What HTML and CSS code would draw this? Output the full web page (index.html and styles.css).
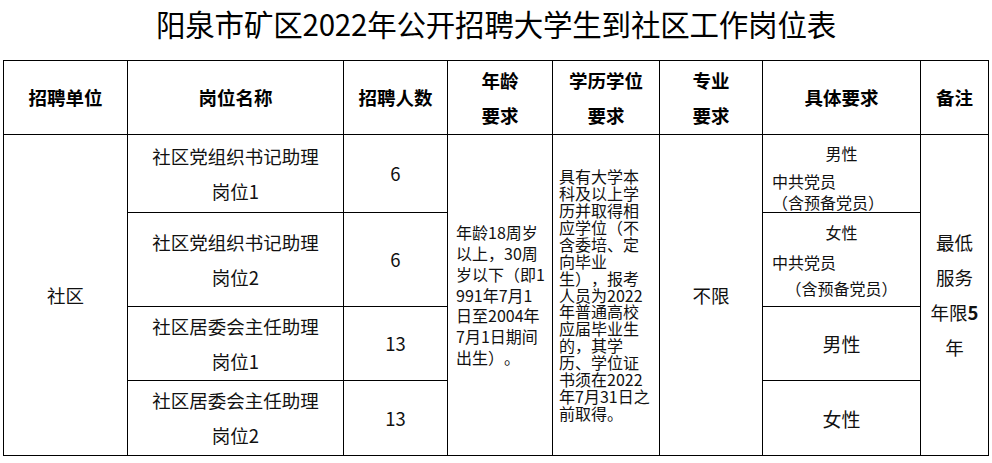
FILE: index.html
```html
<!DOCTYPE html>
<html lang="zh-CN">
<head>
<meta charset="utf-8">
<title>阳泉市矿区2022年公开招聘大学生到社区工作岗位表</title>
<link rel="stylesheet" href="styles.css">
</head>
<body>
<h1 class="title">阳泉市矿区2022年公开招聘大学生到社区工作岗位表</h1>
<table class="jobs">
  <colgroup>
    <col class="c-unit">
    <col class="c-name">
    <col class="c-num">
    <col class="c-age">
    <col class="c-edu">
    <col class="c-major">
    <col class="c-req">
    <col class="c-note">
  </colgroup>
  <thead>
    <tr class="r-head">
      <th>招聘单位</th>
      <th>岗位名称</th>
      <th>招聘人数</th>
      <th>年龄<br>要求</th>
      <th>学历学位<br>要求</th>
      <th>专业<br>要求</th>
      <th>具体要求</th>
      <th>备注</th>
    </tr>
  </thead>
  <tbody>
    <tr class="r1">
      <td rowspan="4">社区</td>
      <td>社区党组织书记助理<br>岗位1</td>
      <td>6</td>
      <td rowspan="4" class="age">年龄18周岁<br>以上，30周<br>岁以下（即1<br>991年7月1<br>日至2004年<br>7月1日期间<br>出生）。</td>
      <td rowspan="4" class="edu">具有大学本<br>科及以上学<br>历并取得相<br>应学位（不<br>含委培、定<br>向毕业<br>生），报考<br>人员为2022<br>年普通高校<br>应届毕业生<br>的，其学<br>历、学位证<br>书须在2022<br>年7月31日之<br>前取得。</td>
      <td rowspan="4">不限</td>
      <td class="req req1">
        <div class="sex">男性</div>
        <div class="party">中共党员</div>
        <div class="pre">（含预备党员）</div>
      </td>
      <td rowspan="4" class="note">最低<br>服务<br>年限<b>5</b><br>年</td>
    </tr>
    <tr class="r2">
      <td>社区党组织书记助理<br>岗位2</td>
      <td>6</td>
      <td class="req req2">
        <div class="sex">女性</div>
        <div class="party">中共党员</div>
        <div class="pre">（含预备党员）</div>
      </td>
    </tr>
    <tr class="r3">
      <td>社区居委会主任助理<br>岗位1</td>
      <td>13</td>
      <td class="big">男性</td>
    </tr>
    <tr class="r4">
      <td>社区居委会主任助理<br>岗位2</td>
      <td>13</td>
      <td class="big">女性</td>
    </tr>
  </tbody>
</table>
</body>
</html>
```
FILE: styles.css
```css
html, body {
  margin: 0;
  padding: 0;
  background: #fff;
}
body {
  width: 992px;
  height: 463px;
  overflow: hidden;
  font-family: "Noto Sans CJK SC", "Noto Sans", sans-serif;
  color: #111;
  text-spacing-trim: space-all;
}
.title {
  margin: 0;
  height: 60px;
  line-height: 46px;
  font-size: 29.5px;
  font-weight: 400;
  text-align: center;
  color: #000;
  letter-spacing: -0.2px;
}
.jobs {
  margin-left: 3px;
  border-collapse: collapse;
  table-layout: fixed;
  width: 985px;
}
.c-unit { width: 124px; }
.c-name { width: 216px; }
.c-num { width: 104px; }
.c-age { width: 105px; }
.c-edu { width: 107px; }
.c-major { width: 103px; }
.c-req { width: 158px; }
.c-note { width: 68px; }

.jobs th,
.jobs td {
  border: 1px solid #000;
  padding: 0;
  text-align: center;
  vertical-align: middle;
  font-size: 18.5px;
  line-height: 35px;
  white-space: nowrap;
}
.jobs th {
  font-weight: 700;
  color: #000;
}
.r-head { height: 74px; }
.r1 { height: 78px; }
.r2 { height: 94px; }
.r3 { height: 74px; }
.r4 { height: 75px; }

.jobs td.age {
  text-align: left;
  font-size: 16px;
  line-height: 20.8px;
  padding-left: 8px;
}
.jobs td.edu {
  text-align: left;
  font-size: 16px;
  line-height: 16.9px;
  padding-left: 6px;
}
.jobs td.note {
  font-size: 18.5px;
  line-height: 35px;
}
.note b {
  font-weight: 700;
}
.jobs td.req {
  vertical-align: top;
  font-size: 16px;
  line-height: 22px;
}
.req .party,
.req1 .pre {
  text-align: left;
  padding-left: 9px;
}
.jobs td.req1 {
  padding-top: 7px;
}
.req1 .party { margin-top: 6px; }
.req1 .pre { line-height: 20px; }
.jobs td.req2 {
  padding-top: 8px;
}
.req2 .party { margin-top: 8px; }
.req2 .pre { margin-top: 4px; }
.jobs td.big {
  font-size: 19px;
}
```
